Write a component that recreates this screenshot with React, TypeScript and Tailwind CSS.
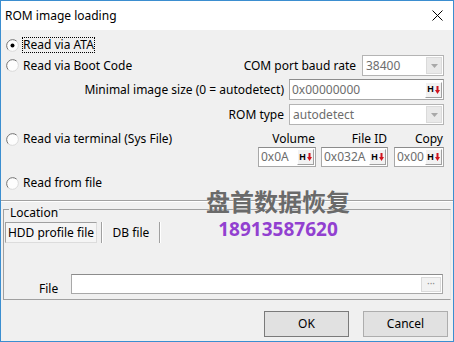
import React from "react";

function Radio({ checked }: { checked?: boolean }) {
  return (
    <svg width="13" height="13" viewBox="0 0 13 13" className="shrink-0">
      <circle cx="6.5" cy="6.5" r="6" fill="#fdfdfd" />
      <path d="M2.26 10.74 A6 6 0 0 1 10.74 2.26" stroke="#707070" fill="none" strokeWidth="1" />
      <path d="M10.74 2.26 A6 6 0 0 1 2.26 10.74" stroke="#d8d8d8" fill="none" strokeWidth="1" />
      {checked && <circle cx="6.5" cy="6.5" r="2" fill="#000" />}
    </svg>
  );
}

function Arrow() {
  return (
    <div className="w-[16px] self-stretch m-[1px] bg-[#e9e9e9] border border-[#dadada] flex items-center justify-center">
      <svg width="7" height="4" viewBox="0 0 7 4">
        <path d="M0 0 H7 L3.5 4 Z" fill="#a8a8a8" />
      </svg>
    </div>
  );
}

function Combo({ className, value }: { className: string; value: string }) {
  return (
    <div className={`${className} h-[21px] border border-[#b4b4b4] bg-white flex items-stretch`}>
      <span className="flex-1 pl-[3px] flex items-center text-[#6d6d6d]">{value}</span>
      <Arrow />
    </div>
  );
}

function HBtn() {
  return (
    <div className="w-[17px] h-[16px] mr-[1px] bg-[#f2f2f2] border border-t-white border-l-white border-r-[#a0a0a0] border-b-[#a0a0a0] flex items-center justify-center gap-[1px]">
      <span className="text-[9px] font-bold leading-none font-['Liberation_Sans',sans-serif]">H</span>
      <svg width="5" height="8" viewBox="0 0 5 8">
        <path d="M1.5 0 H3.5 V4 H5 L2.5 8 L0 4 H1.5 Z" fill="#d0141e" />
      </svg>
    </div>
  );
}

function HexInput({ className, value }: { className: string; value: string }) {
  return (
    <div className={`${className} h-[20px] border border-[#a8a8a8] border-t-[#8c8c8c] bg-white flex items-center justify-between`}>
      <span className="pl-[2px] text-[#6d6d6d]">{value}</span>
      <HBtn />
    </div>
  );
}

function RadioLabel({ checked, focus, children }: { checked?: boolean; focus?: boolean; children: React.ReactNode }) {
  return (
    <div className="flex items-center">
      <Radio checked={checked} />
      <span
        className={
          focus
            ? "ml-[3px] border border-dotted border-black leading-[14px]"
            : "ml-[3px] border border-transparent leading-[14px]"
        }
      >
        {children}
      </span>
    </div>
  );
}

function Button({ children, primary }: { children: React.ReactNode; primary?: boolean }) {
  return (
    <div
      className={
        primary
          ? "w-[85px] h-[26px] border border-[#7a7a7a] bg-[#e1e1e1] flex items-center justify-center"
          : "w-[85px] h-[26px] border border-[#adadad] bg-[#e1e1e1] flex items-center justify-center"
      }
    >
      {children}
    </div>
  );
}

export default function App() {
  return (
    <div className="w-[454px] h-[342px] border border-[#3b8ed0] bg-[#f0f0f0] flex flex-col relative overflow-hidden font-['Noto_Sans',sans-serif] text-[12px] leading-[16px] text-black">
      {/* Title bar */}
      <div className="h-[29px] shrink-0 bg-white flex items-center justify-between pl-[4px] pr-[10px]">
        <span>ROM image loading</span>
        <svg width="11" height="11" viewBox="0 0 11 11">
          <path d="M0.5 0.5 L10.5 10.5 M10.5 0.5 L0.5 10.5" stroke="#000" strokeWidth="1" />
        </svg>
      </div>

      <div className="flex flex-col pt-[7px]">
        <div className="h-[16px] flex items-center pl-[5px]">
          <RadioLabel checked focus>Read via ATA</RadioLabel>
        </div>

        <div className="mt-[2px] h-[21px] flex items-center justify-between pl-[5px] pr-[9px]">
          <RadioLabel>Read via Boot Code</RadioLabel>
          <div className="flex items-center gap-[6px]">
            <span>COM port baud rate</span>
            <Combo className="w-[82px]" value="38400" />
          </div>
        </div>

        <div className="mt-[3px] h-[21px] flex items-center justify-end gap-[5px] pr-[9px]">
          <span>Minimal image size (0 = autodetect)</span>
          <HexInput className="w-[155px] h-[21px]" value="0x00000000" />
        </div>

        <div className="mt-[4px] h-[21px] flex items-center justify-end gap-[5px] pr-[9px]">
          <span>ROM type</span>
          <Combo className="w-[155px]" value="autodetect" />
        </div>

        <div className="mt-[6px] h-[16px] flex items-center justify-between pl-[5px] pr-[9px]">
          <RadioLabel>Read via terminal (Sys File)</RadioLabel>
          <div className="flex items-center">
            <span className="w-[58px] text-right pr-[1px]">Volume</span>
            <span className="ml-[5px] w-[67px] text-right pr-[1px]">File ID</span>
            <span className="ml-[6px] w-[50px] text-right pr-[1px]">Copy</span>
          </div>
        </div>

        <div className="h-[20px] flex items-center justify-end pr-[9px]">
          <HexInput className="w-[58px]" value="0x0A" />
          <HexInput className="ml-[5px] w-[67px]" value="0x032A" />
          <HexInput className="ml-[6px] w-[50px]" value="0x00" />
        </div>

        <div className="mt-[8px] h-[16px] flex items-center pl-[5px]">
          <RadioLabel>Read from file</RadioLabel>
        </div>

        <div className="mt-[9px] h-[2px] border-t border-t-[#a0a0a0] border-b border-b-white" />

        {/* Location group */}
        <div className="mt-[7px] mx-[2px] h-[91px] border border-[#a0a0a0] border-r-[#e8e8e8] flex flex-col">
          <span className="-mt-[5px] ml-[5px] w-fit bg-[#f0f0f0] px-[1px] leading-[16px]">Location</span>
          <div className="mt-[1px] ml-[1px] h-[21px] flex items-stretch">
            <div className="w-[92px] bg-[#f5f5f5] border border-t-[#a0a0a0] border-l-[#a0a0a0] border-r-[#dcdcdc] border-b-[#dcdcdc] flex items-center justify-center">
              HDD profile file
            </div>
            <div className="ml-[4px] w-[2px] border-l border-l-[#a0a0a0] border-r border-r-white" />
            <div className="w-[56px] flex items-center justify-center">DB file</div>
            <div className="w-[2px] border-l border-l-[#a0a0a0] border-r border-r-white" />
          </div>
          <div className="mt-[31px] h-[20px] flex items-end">
            <span className="ml-[35px] w-[32px] -mb-[3px]">File</span>
            <div className="flex-1 mr-[7px] h-[20px] border border-[#a8a8a8] border-t-[#8c8c8c] bg-white flex items-center justify-end">
              <div className="w-[20px] h-[15px] mr-[1px] bg-[#f2f2f2] border border-[#dadada] flex items-center justify-center text-[#8a8a8a] text-[10px] leading-none pb-[3px]">
                ···
              </div>
            </div>
          </div>
        </div>

        <div className="mt-[11px] flex justify-end gap-[14px] pr-[5px]">
          <Button primary>OK</Button>
          <Button>Cancel</Button>
        </div>
      </div>

      {/* Watermark overlay */}
      <div className="absolute left-[205px] top-[188px] flex flex-col items-center gap-[6px] pointer-events-none">
        <span className="font-['Noto_Sans_CJK_SC',sans-serif] font-bold text-[24px] leading-[24px] text-[#6a6a6a] [text-shadow:0_0_1px_#fff]">
          盘首数据恢复
        </span>
        <span className="font-['Noto_Sans',sans-serif] font-bold text-[19px] leading-[20px] text-[#9240d0]">
          18913587620
        </span>
      </div>
    </div>
  );
}
